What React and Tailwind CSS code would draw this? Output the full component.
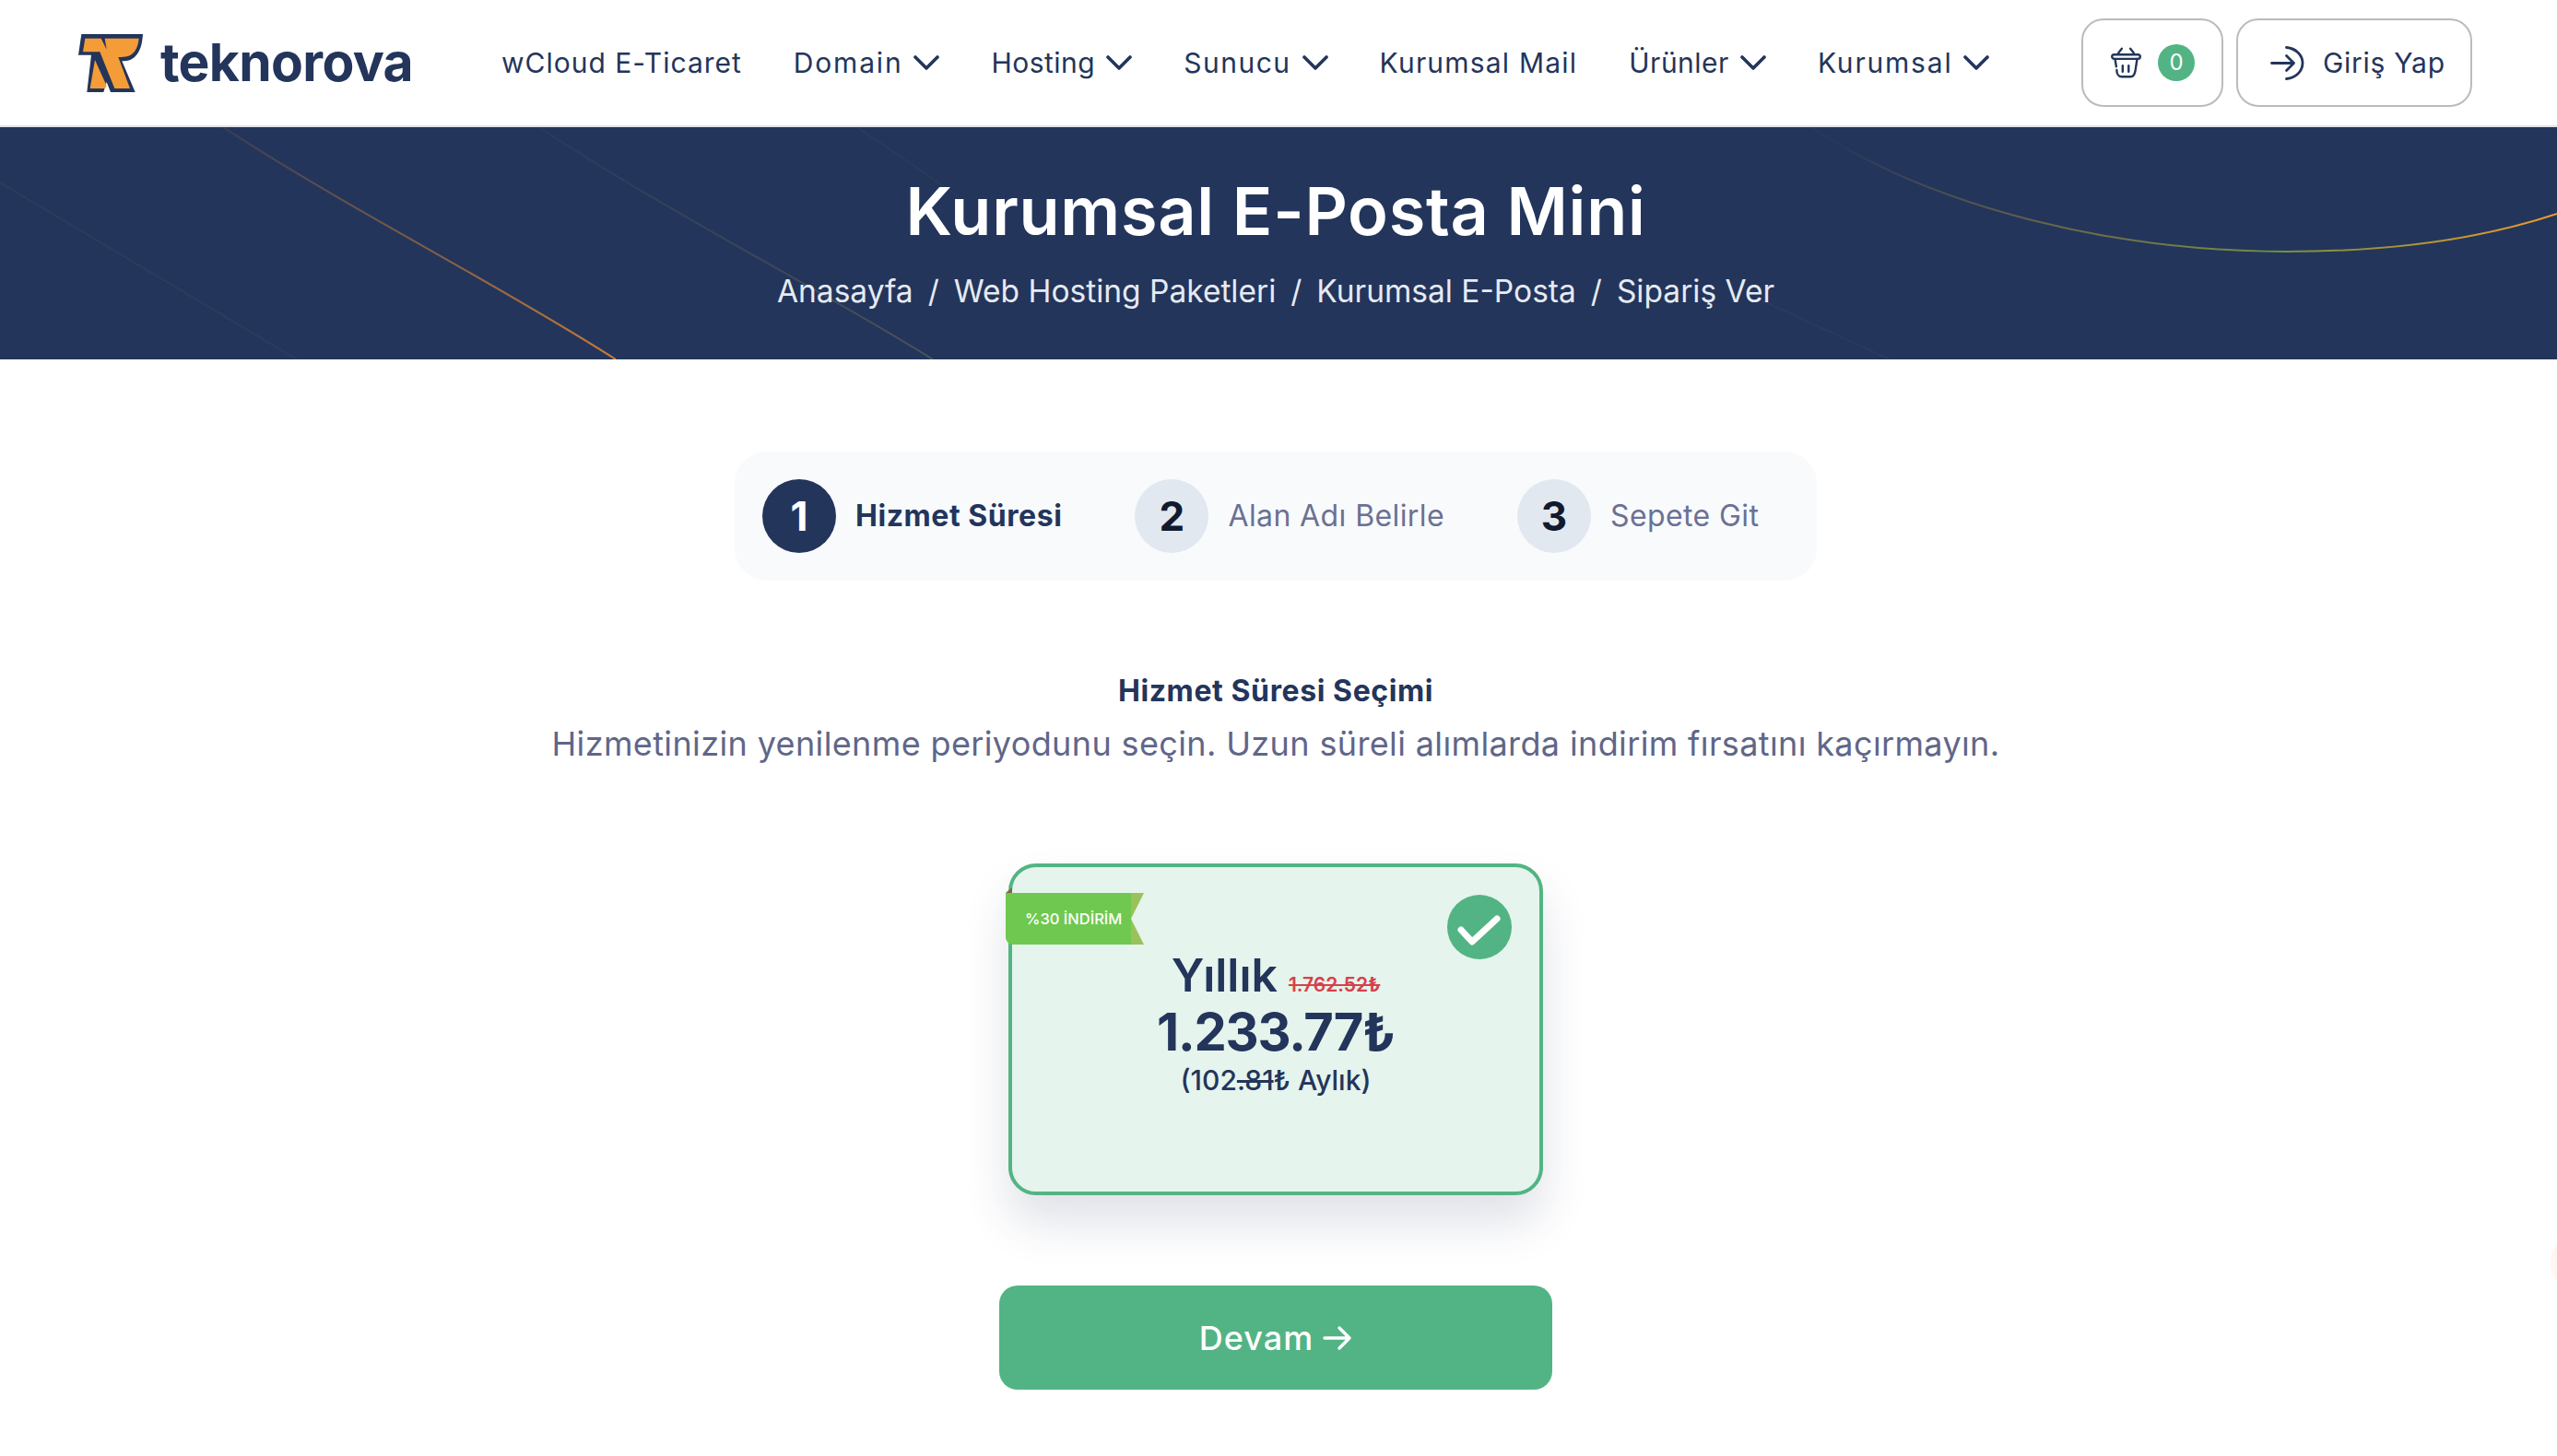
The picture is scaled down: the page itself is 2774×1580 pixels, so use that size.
import React from 'react';

const navItems = [
  { label: 'wCloud E-Ticaret', track: 'tracking-[1px]' },
  { label: 'Domain', caret: true, track: 'tracking-[1.8px]' },
  { label: 'Hosting', caret: true, track: 'tracking-[0.5px]' },
  { label: 'Sunucu', caret: true, track: 'tracking-[1.5px]' },
  { label: 'Kurumsal Mail', track: 'tracking-[1.2px]' },
  { label: 'Ürünler', caret: true, track: 'tracking-[0.5px]' },
  { label: 'Kurumsal', caret: true, track: 'tracking-[1.8px]' },
];

const steps = [
  { n: 1, label: 'Hizmet Süresi', active: true, ml: 'ml-0' },
  { n: 2, label: 'Alan Adı Belirle', ml: 'ml-[79px]' },
  { n: 3, label: 'Sepete Git', ml: 'ml-[79px]' },
];

const Logo = () => (
  <svg width="70" height="63" viewBox="30 24 210 189" className="shrink-0">
    <path d="M40 24H240C238 55 232 80 215 97C205 108 190 112 172 112L215 213H135L122 180L112 213H58L72 92H30Z" fill="#23355b" />
    <path
      d="M52 38H104L122 74L116 38H227C225 60 218 78 206 88C196 97 185 99 160 99L198 201H148L100 82H45Z"
      fill="#f39c38"
    />
    <path d="M84 108L122 192L117 201H68Z" fill="#f39c38" />
  </svg>
);

const Caret = () => (
  <svg width="28" height="16" viewBox="0 0 28 16" fill="none" stroke="#23355b" strokeWidth="3.6" strokeLinecap="round" strokeLinejoin="round">
    <path d="M2 2l12 12L26 2" />
  </svg>
);

const BasketIcon = () => (
  <svg width="35" height="37" viewBox="0 0 36 40" fill="none" stroke="#23355b" strokeWidth="2.6" strokeLinecap="round" strokeLinejoin="round">
    <path d="M9 8l4-5M27 8l-4-5" />
    <path d="M4 10h28a2 2 0 0 1 0 5H4a2 2 0 0 1 0-5Z" />
    <path d="M5 15l1.5 9M7 28c0 4 2 8 6 8h10c4 0 5-3 6-8l2-13" />
    <path d="M14 23v7M21 23v7" />
  </svg>
);

const LoginIcon = () => (
  <svg width="37" height="37" viewBox="0 0 37 37" fill="none" stroke="#23355b" strokeWidth="2.8" strokeLinecap="round" strokeLinejoin="round">
    <path d="M1.5 18.5h24M17.500 10.500l8 8-8 8" />
    <path d="M17.500 1.500c10 1 17.500 8 17.500 17s-7.500 16-17.500 17" />
  </svg>
);

const CheckMark = () => (
  <svg width="70" height="70" viewBox="0 0 70 70" fill="none" stroke="#ffffff" strokeWidth="7" strokeLinecap="round" strokeLinejoin="round">
    <path d="M15 38l12 13 27-25" />
  </svg>
);

const ArrowIcon = () => (
  <svg width="32" height="28" viewBox="0 0 32 28" fill="none" stroke="#ffffff" strokeWidth="3.4" strokeLinecap="round" strokeLinejoin="round">
    <path d="M2 14h27M18 3l11 11-11 11" />
  </svg>
);

const HeroLines = () => (
  <svg className="absolute inset-0 h-full w-full" viewBox="0 0 2774 252" preserveAspectRatio="none" fill="none">
    <defs>
      <linearGradient id="fadeOrange" x1="0" y1="0" x2="0" y2="1">
        <stop offset="0" stopColor="#f08c2e" stopOpacity="0.1" />
        <stop offset="1" stopColor="#f08c2e" stopOpacity="0.8" />
      </linearGradient>
      <linearGradient id="fadeDim" x1="0" y1="0" x2="0" y2="1">
        <stop offset="0" stopColor="#f0c050" stopOpacity="0.03" />
        <stop offset="1" stopColor="#f0c050" stopOpacity="0.2" />
      </linearGradient>
      <linearGradient id="curve" gradientUnits="userSpaceOnUse" x1="2000" y1="0" x2="2774" y2="0">
        <stop offset="0" stopColor="#f0a030" stopOpacity="0.03" />
        <stop offset="0.6" stopColor="#7a9a3c" stopOpacity="0.9" />
        <stop offset="1" stopColor="#f09a30" />
      </linearGradient>
    </defs>
    <path d="M242 0C380 90 540 170 668 252" stroke="url(#fadeOrange)" strokeWidth="2" />
    <path d="M585 0C720 90 880 170 1012 252" stroke="url(#fadeDim)" strokeWidth="2" />
    <path d="M0 60C110 125 220 190 322 252" stroke="#f0c050" strokeOpacity="0.05" strokeWidth="2" />
    <path d="M930 0L1040 75" stroke="#f0c050" strokeOpacity="0.04" strokeWidth="2" />
    <path d="M1965 0C2100 90 2300 135 2480 135C2590 135 2690 122 2774 94" stroke="url(#curve)" strokeWidth="2" />
    <path d="M1905 185L2050 252" stroke="#f0c050" strokeOpacity="0.04" strokeWidth="2" />
  </svg>
);

export default function App() {
  return (
    <div
      className="relative h-[1580px] overflow-hidden bg-white text-[#23355b]"
      style={{ fontFamily: 'Inter, "Noto Sans", sans-serif' }}
    >
      <header className="flex h-[138px] items-center border-b-2 border-[#dfe3ea] pl-[85px] pr-[92px]">
        <Logo />
        <span className="ml-[19px] pb-[2px] text-[57px] leading-none font-bold tracking-[-0.7px]">teknorova</span>
        <nav className="ml-[96px] flex items-center gap-[56px]">
          {navItems.map((item) => (
            <a key={item.label} className={`flex items-center gap-[12px] text-[30px] text-[#23355b] ${item.track}`}>
              {item.label}
              {item.caret && <Caret />}
            </a>
          ))}
        </nav>
        <div className="ml-auto flex gap-[14px]">
          <button className="flex h-[96px] w-[154px] items-center justify-center gap-[17px] rounded-[24px] border-2 border-[#bbbbbb]">
            <BasketIcon />
            <span className="flex h-[40px] w-[40px] items-center justify-center rounded-full bg-[#52b484] text-[24px] text-white">0</span>
          </button>
          <button className="flex h-[96px] w-[256px] items-center gap-[20px] rounded-[24px] border-2 border-[#bbbbbb] pl-[35px] text-[30px] tracking-[0.7px]">
            <LoginIcon />
            Giriş Yap
          </button>
        </div>
      </header>

      <section className="relative h-[252px] overflow-hidden bg-[#23355b]">
        <HeroLines />
        <div className="relative flex flex-col items-center pt-[48px] pr-[6px]">
          <h1 className="text-[72px] leading-[86px] font-semibold tracking-[0.75px] text-white">Kurumsal E-Posta Mini</h1>
          <div className="mt-[22px] flex items-center gap-[16px] text-[33.5px] leading-[44px] text-[#e6eaf2]">
            <span>Anasayfa</span>
            <span>/</span>
            <span>Web Hosting Paketleri</span>
            <span>/</span>
            <span>Kurumsal E-Posta</span>
            <span>/</span>
            <span>Sipariş Ver</span>
          </div>
        </div>
      </section>

      <main className="flex flex-col items-center pr-[6px]">
        <div className="mt-[100px] flex h-[140px] w-[1174px] items-center rounded-[35px] bg-[#f8fafc] pl-[30px]">
          {steps.map((step) => (
            <div key={step.n} className={`flex items-center gap-[21px] ${step.ml}`}>
              <span
                className={`flex h-[80px] w-[80px] items-center justify-center rounded-full text-[44px] font-bold ${
                  step.active ? 'bg-[#23355b] text-white' : 'bg-[#e2e8f0] text-[#111a2e]'
                }`}
              >
                {step.n}
              </span>
              <span
                className={
                  step.active
                    ? 'text-[32px] font-bold tracking-[0.55px] text-[#23355b]'
                    : 'text-[32px] tracking-[0.4px] text-[#6b7194]'
                }
              >
                {step.label}
              </span>
            </div>
          ))}
        </div>

        <h2 className="mt-[100px] text-[32px] leading-[40px] font-bold tracking-[0.6px]">Hizmet Süresi Seçimi</h2>
        <p className="mt-[14px] text-[36px] leading-[46px] tracking-[0.37px] text-[#5f6689]">
          Hizmetinizin yenilenme periyodunu seçin. Uzun süreli alımlarda indirim fırsatını kaçırmayın.
        </p>

        <div className="relative mt-[107px] flex h-[360px] w-[580px] flex-col items-center rounded-[30px] border-[4px] border-[#52b484] bg-[#e5f4ec] pt-[87px] shadow-[0_30px_50px_rgba(35,53,91,0.14)]">
          <div className="absolute left-[-7px] top-[28px] flex h-[56px] w-[150px]">
            <span className="absolute left-0 top-[-6px] h-0 w-0 border-b-[6px] border-l-[7px] border-b-[#7d6a3a] border-l-transparent" />
            <span className="flex w-[136px] items-center rounded-bl-[8px] bg-[#6fc850] pl-[21px] text-[16.5px] font-medium whitespace-nowrap text-white">
              %30 İNDİRİM
            </span>
            <svg width="14" height="56" viewBox="0 0 14 56" className="shrink-0">
              <path d="M0 0H14L0 28L14 56H0Z" fill="#9ac25a" />
            </svg>
          </div>
          <span className="absolute right-[30px] top-[30px] h-[70px] w-[70px] rounded-full bg-[#52b484]">
            <CheckMark />
          </span>
          <div className="flex items-baseline gap-[12px]">
            <span className="text-[50px] leading-[60px] font-semibold">Yıllık</span>
            <span className="text-[21px] font-semibold text-[#d6404b] line-through">1.762.52₺</span>
          </div>
          <div className="text-[56px] leading-[64px] font-bold tracking-[-1.2px]">1.233.77₺</div>
          <div className="text-[30px] leading-[40px] font-medium">
            (102<span className="line-through">.81</span>₺ Aylık)
          </div>
        </div>

        <button className="mt-[98px] flex h-[113px] w-[600px] items-center justify-center gap-[10px] rounded-[20px] bg-[#52b484] text-[36px] font-medium tracking-[1px] text-white">
          Devam
          <ArrowIcon />
        </button>
      </main>

      {/* chat bubble glow poking in from the right edge */}
      <span className="absolute left-[2767px] top-[1335px] h-[70px] w-[70px] rounded-full bg-[#fff6f0]" />
    </div>
  );
}
